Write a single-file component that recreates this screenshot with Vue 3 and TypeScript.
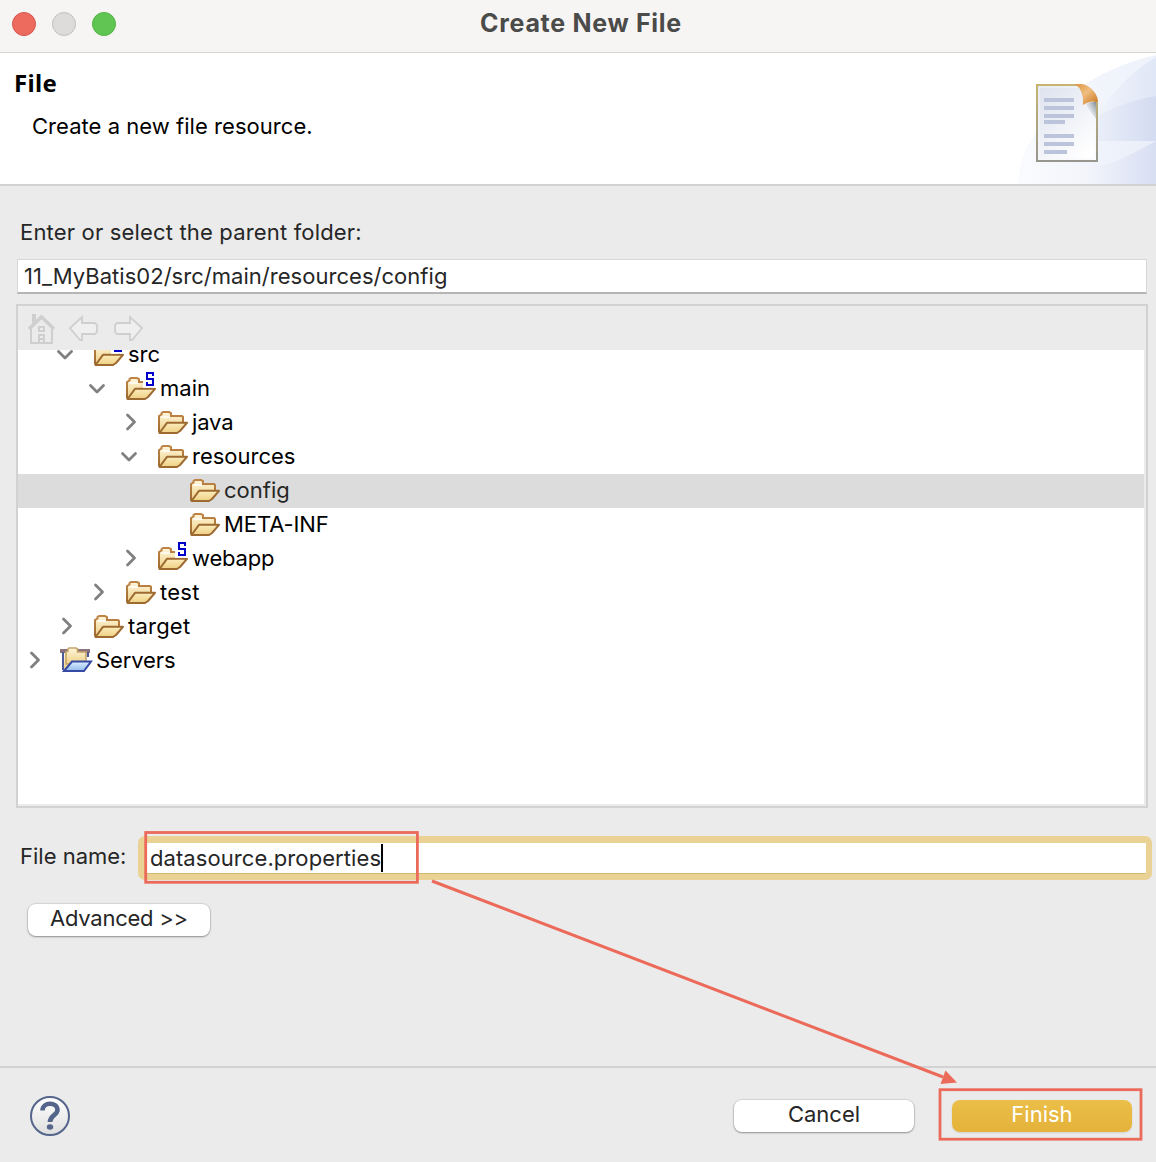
<script setup lang="ts">
interface TreeRow {
  label: string
  level: number
  state: 'open' | 'closed' | 'leaf'
  source?: boolean
  project?: boolean
  selected?: boolean
  spacing: number
}

const rows: TreeRow[] = [
  { label: 'src', level: 1, state: 'open', source: true, spacing: 0 },
  { label: 'main', level: 2, state: 'open', source: true, spacing: 0 },
  { label: 'java', level: 3, state: 'closed', spacing: -0.15 },
  { label: 'resources', level: 3, state: 'open', spacing: 0 },
  { label: 'config', level: 4, state: 'leaf', selected: true, spacing: 0 },
  { label: 'META-INF', level: 4, state: 'leaf', spacing: -0.1 },
  { label: 'webapp', level: 3, state: 'closed', source: true, spacing: -0.2 },
  { label: 'test', level: 2, state: 'closed', spacing: 0.25 },
  { label: 'target', level: 1, state: 'closed', spacing: 0.2 },
  { label: 'Servers', level: 0, state: 'closed', project: true, spacing: -0.1 },
]
const parentFolder = '11_MyBatis02/src/main/resources/config'
const fileName = 'datasource.properties'
</script>

<template>
  <div class="window">
    <div class="titlebar">
      <div class="lights"><i class="red" /><i class="grey" /><i class="green" /></div>
      <span class="title">Create New File</span>
    </div>
    <header class="banner">
      <div class="heading">
        <h1>File</h1>
        <p>Create a new file resource.</p>
      </div>
      <svg class="art" width="160" height="131" viewBox="0 0 160 131">
        <defs>
          <linearGradient id="sky" x1="0" x2="1"><stop offset="0" stop-color="#f8f9fd" /><stop offset=".55" stop-color="#f2f5fc" /><stop offset="1" stop-color="#eef2fb" /></linearGradient>
          <linearGradient id="mid" x1="0" x2="1"><stop offset="0" stop-color="#eff3fb" /><stop offset="1" stop-color="#e0e7f6" /></linearGradient>
          <linearGradient id="deep" x1="0" x2="1"><stop offset="0" stop-color="#eaeff9" /><stop offset="1" stop-color="#d3dbf1" /></linearGradient>
          <linearGradient id="mist" x1="0" x2="1"><stop offset="0" stop-color="#fafbfe" /><stop offset="1" stop-color="#e9eef9" /></linearGradient>
          <linearGradient id="low" x1="0" x2="1"><stop offset="0" stop-color="#fafbfe" /><stop offset=".5" stop-color="#f3f5fb" /><stop offset="1" stop-color="#d8dff3" /></linearGradient>
          <linearGradient id="edge" x1="0" y1="0" x2="0" y2="1"><stop offset="0" stop-color="#c7b56f" /><stop offset="1" stop-color="#97968e" /></linearGradient>
          <linearGradient id="paper" x1="0" y1="0" x2=".7" y2="1"><stop offset="0" stop-color="#dbe1ed" /><stop offset="1" stop-color="#ffffff" /></linearGradient>
          <linearGradient id="curl" x1="0" y1="0" x2="1" y2="1"><stop offset="0" stop-color="#dd9440" /><stop offset=".45" stop-color="#efbd80" /><stop offset="1" stop-color="#c87316" /></linearGradient>
          <linearGradient id="shade" x1="1" y1="0" x2="0" y2="1"><stop offset="0" stop-color="#7b878c" /><stop offset=".7" stop-color="#dfe5ea" stop-opacity=".4" /></linearGradient>
        </defs>
        <path d="M22 131C25 85 68 23 160 2V131Z" fill="url(#sky)" />
        <path d="M100 64C112 45 132 20 160 4V44Q123 51 100 64Z" fill="url(#mid)" />
        <path d="M100 64Q128 48 160 43V89H100Z" fill="url(#deep)" />
        <path d="M34 88H160V131H22C23 116 26 103 34 88Z" fill="url(#mist)" />
        <path d="M22 131Q24 119 28 112H108Q120 110 160 88V131Z" fill="url(#low)" />
        <path d="M41 32H84L101 50V108H41Z" fill="url(#paper)" stroke="url(#edge)" stroke-width="2" />
        <path d="M43 34H83L99 50V106H43Z" fill="none" stroke="#f5f7fa" />
        <path d="M48 45h30v4H48zM48 53h30v4H48zM48 61h30v4H48zM48 67h21v4H48zM48 81h30v4H48zM48 89h30v4H48zM48 97h23v4H48z" fill="#bbc4da" />
        <path d="M90 51Q97 48 100 49V66Q95 60 90 51Z" fill="url(#shade)" />
        <path d="M79 31H86C96 33 102 42 102 49Q94 47 87 52Q88 37 79 31Z" fill="url(#curl)" />
      </svg>
    </header>

    <main class="body">
      <label class="parent-label">Enter or select the parent folder:</label>
      <div class="field"><span>{{ parentFolder }}</span></div>

      <section class="tree">
        <div class="toolbar">
          <svg width="126" height="32" viewBox="0 0 126 32" fill="none" stroke="#cfcfcf" stroke-width="2">
            <path d="M4 16V30H25V16M6 10V2H8V8" />
            <path d="M2 16L14.500 4L27 16" stroke-width="3.500" />
            <path d="M12 14h5v4h-5zM12 22h5v8h-5zM12 26h5" />
            <path d="M43 15L55 4V10H68L70 12V19L68 21H55V27H53Z" fill="#efefef" stroke-width="1.800" />
            <path d="M115 15L103 4V10H90L88 12V19L90 21H103V27H105Z" fill="#efefef" stroke-width="1.800" />
          </svg>
        </div>
        <div class="list">
          <div
            v-for="row in rows"
            :key="row.label"
            class="row"
            :class="{ selected: row.selected }"
            :style="{ paddingLeft: row.level * 32 + 8 + 'px' }"
          >
            <svg class="chevron" width="20" height="20" viewBox="0 0 20 20">
              <path v-if="row.state === 'open'" d="M0.500 6.500L7 13L13.500 6.500" />
              <path v-if="row.state === 'closed'" d="M5.500 2L12.500 9L5.500 16" />
            </svg>
            <svg class="folder" width="34" height="34" viewBox="0 0 34 34">
              <defs>
                <linearGradient id="back" x1="0" y1="0" x2="0" y2="1"><stop offset="0" stop-color="#fff6dc" /><stop offset="1" stop-color="#edcf83" /></linearGradient>
                <linearGradient id="front" x1="0" y1="0" x2="0" y2="1"><stop offset="0" stop-color="#fbedbd" /><stop offset="1" stop-color="#efd083" /></linearGradient>
                <linearGradient id="blue" x1="0" y1="0" x2="0" y2="1"><stop offset="0" stop-color="#dcefff" /><stop offset="1" stop-color="#92bbec" /></linearGradient>
                <linearGradient id="rim" x1="0" y1="0" x2="0" y2="1"><stop offset="0" stop-color="#c08546" /><stop offset="1" stop-color="#9d6a31" /></linearGradient>
              </defs>
              <template v-if="row.project">
                <path d="M4 26V9H26V20" fill="url(#back)" />
                <path d="M0 7H30" stroke="#8a737c" stroke-width="4" />
                <path d="M6 11V8L8 7V5L9 4H16L17.500 5V8H26V20H6Z" fill="url(#back)" stroke="#c5a468" stroke-width="1.600" />
                <path d="M3 8V26M28 8V13" stroke="#4e5999" stroke-width="2" />
                <path d="M4 27L12 17.500H31L24 27Z" fill="url(#blue)" stroke="#3549a5" stroke-width="2" />
              </template>
              <template v-else>
                <path d="M3 26.500V10L5.500 8.500V7L7 6H13L15 7V10H26L27 11V17" fill="url(#back)" stroke="url(#rim)" stroke-width="2" />
                <path d="M5.500 11H14" stroke="#fffaf0" stroke-width="2" />
                <path d="M3.500 27L11 16.800H31L24 25L21 27Z" fill="url(#front)" stroke="#9d6a31" stroke-width="2" stroke-linejoin="round" />
              </template>
              <template v-if="row.source">
                <path d="M19 -1H32V15.800H19Z" :fill="row.selected ? '#dcdcdc' : '#fff'" />
                <path d="M29 4V1H23V7H29V13H23V10" fill="none" stroke="#0000cc" stroke-width="2" />
              </template>
            </svg>
            <span class="name" :style="{ letterSpacing: row.spacing + 'px' }">{{ row.label }}</span>
          </div>
        </div>
      </section>

      <div class="file-row">
        <label>File name:</label>
        <div class="focus"><span>{{ fileName }}</span><i class="caret" /></div>
      </div>
      <button class="btn advanced">Advanced &gt;&gt;</button>
    </main>

    <footer class="footer">
      <svg class="help" width="40" height="40" viewBox="0 0 40 40">
        <defs><linearGradient id="hg" x1="0" y1="0" x2="0" y2="1"><stop offset="0" stop-color="#fff" /><stop offset="1" stop-color="#dedede" /></linearGradient></defs>
        <circle cx="20" cy="20" r="19" fill="url(#hg)" stroke="#54648a" stroke-width="2" />
        <path d="M12.500 14.500C12.500 5.500 27.500 5.500 27.500 14C27.500 19.500 20 19 20 26" fill="none" stroke="#54648a" stroke-width="4.600" />
        <ellipse cx="20" cy="31" rx="3.200" ry="2.800" fill="#54648a" />
      </svg>
      <div class="actions">
        <button class="btn">Cancel</button>
        <button class="btn primary">Finish</button>
      </div>
    </footer>

    <svg class="annotations" width="1156" height="1162" viewBox="0 0 1156 1162">
      <g fill="none" stroke="#ec6a5a" stroke-width="2.800">
        <rect x="145.700" y="832.500" width="271.700" height="49.800" />
        <rect x="940" y="1089.700" width="201" height="49.500" />
        <path d="M432 881L943 1077" stroke-width="3" />
      </g>
      <path d="M957 1082.500L945.500 1070.500L940.500 1084Z" fill="#ec6a5a" />
    </svg>
  </div>
</template>

<style>
body {
  margin: 0;
}
</style>

<style scoped>
.window {
  position: relative;
  width: 1156px;
  height: 1162px;
  overflow: hidden;
  display: flex;
  flex-direction: column;
  background: #ebebeb;
  color: #262626;
  font: 22px/34px Inter, "Liberation Sans", sans-serif;
}
.window * {
  box-sizing: border-box;
}
.titlebar {
  height: 53px;
  flex: none;
  display: grid;
  grid-template-columns: 1fr auto 1fr;
  background: #f6f5f4;
  border-bottom: 1px solid #d6d5d4;
}
.lights {
  display: flex;
  gap: 16px;
  padding: 12px;
}
.lights i {
  width: 24px;
  height: 24px;
  border-radius: 50%;
  border: 1px solid;
}
.red { background: #ed6a5e; border-color: #d85549 !important; }
.grey { background: #dddcdb; border-color: #c1c0bf !important; }
.green { background: #61c554; border-color: #52b344 !important; }
.title {
  padding: 6px 0 0 6px;
  font-size: 25px;
  font-weight: 700;
  letter-spacing: 0.7px;
  color: #4b4b4a;
  white-space: nowrap;
}
.banner {
  height: 133px;
  flex: none;
  display: flex;
  justify-content: space-between;
  background: #fff;
  border-bottom: 2px solid #d2d2d2;
  color: #000;
}
.heading {
  padding: 13px 0 0 14px;
}
h1 {
  margin: 0;
  font: 700 24px/34px "Noto Sans", "Open Sans", sans-serif;
  letter-spacing: 0.3px;
}
p {
  margin: 9px 0 0 18px;
  letter-spacing: 0.04px;
}
.body {
  flex: 1;
  display: flex;
  flex-direction: column;
  padding: 29px 8px 0 16px;
}
.parent-label {
  margin-left: 4px;
  height: 44px;
  letter-spacing: 0.17px;
}
.field {
  height: 35px;
  margin: 0 1px;
  padding: 1px 6px;
  background: #fff;
  border: 1px solid #d7d7d7;
  border-bottom: 2px solid #b5b5b5;
  line-height: 31px;
  letter-spacing: 0.03px;
}
.tree {
  height: 504px;
  margin-top: 10px;
  display: flex;
  flex-direction: column;
  border: 2px solid #d2d2d2;
}
.toolbar {
  height: 44px;
  flex: none;
  padding: 7px 0 0 9px;
}
.list {
  flex: 1;
  margin: 0 2px 2px 0;
  overflow: hidden;
  display: flex;
  flex-direction: column;
  background: #fff;
  color: #000;
}
.row {
  height: 34px;
  flex: none;
  display: flex;
  align-items: center;
}
.row:first-child {
  margin-top: -12px;
}
.selected {
  background: #dcdcdc;
  color: #262626;
}
.chevron {
  flex: none;
  margin-right: 14px;
  fill: none;
  stroke: #808080;
  stroke-width: 2.800;
  stroke-linecap: round;
  stroke-linejoin: round;
  overflow: visible;
}
.folder {
  flex: none;
}
.name {
  margin-left: 2px;
  line-height: 33px;
  padding-bottom: 1px;
}
.file-row {
  display: flex;
  height: 44px;
  margin: 28px -4px 0 4px;
}
.file-row label {
  width: 118px;
  line-height: 40px;
}
.focus {
  flex: 1;
  display: flex;
  align-items: center;
  padding: 0 4px 2px;
  background: #fff;
  border: solid #ead194;
  border-width: 7px 6px 6px 8px;
  border-radius: 7px;
  box-shadow: inset 0 -1px #d1b970;
  letter-spacing: 0.08px;
}
.caret {
  width: 2px;
  height: 28px;
  background: #000;
}
.btn {
  width: 182px;
  height: 32px;
  padding: 0 0 4px;
  border: 0;
  border-radius: 8px;
  background: #fff;
  box-shadow: 0 0 1px 1px #00000018, 0 1px 2px #00000055;
  color: #262626;
  font: 22px/28px Inter, "Liberation Sans", sans-serif;
}
.advanced {
  margin: 24px 0 0 12px;
  letter-spacing: -0.25px;
}
.footer {
  height: 96px;
  flex: none;
  display: flex;
  justify-content: space-between;
  align-items: flex-start;
  padding: 28px 24px 0 30px;
  border-top: 2px solid #d2d2d2;
}
.actions {
  display: flex;
  gap: 38px;
  padding-top: 4px;
}
.actions .btn {
  width: 180px;
}
.actions .primary {
  background: linear-gradient(#ebbf48, #e5b23b);
  color: #fff;
  box-shadow: 0 1px 2px #0000001c;
}
.annotations {
  position: absolute;
  inset: 0;
  pointer-events: none;
}
</style>
